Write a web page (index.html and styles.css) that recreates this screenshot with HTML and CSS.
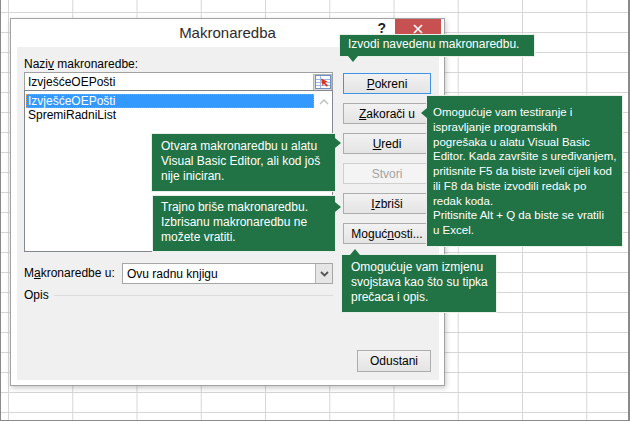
FILE: index.html
```html
<!DOCTYPE html>
<html lang="hr">
<head>
  <meta charset="UTF-8">
  <title>Makronaredba</title>
  <link rel="stylesheet" href="styles.css">
</head>
<body>
  <div class="sheet">
    <div class="dialog">
      <div class="titlebar">
        <span></span>
        <span class="title">Makronaredba</span>
        <div class="caption-buttons">
          <span class="help">?</span>
          <span class="close">
            <svg width="10" height="10" viewBox="0 0 10 10"><path d="M1 1L9 9M9 1L1 9" stroke="#fff" stroke-width="1.7"/></svg>
          </span>
        </div>
      </div>
      <div class="client">
        <div class="left-col">
          <div class="field-label">Nazi<u>v</u> makronaredbe:</div>
          <div class="name-input">
            <span class="value">IzvješćeOEPošti</span>
            <span class="picker">
              <svg width="16" height="14" viewBox="0 0 16 14">
                <rect x="0.5" y="0.5" width="15" height="13" fill="#fff" stroke="#6f8fc0"/>
                <path d="M1 4.5h14M1 7.5h14M1 10.5h14M5.5 1v12" stroke="#9fb8e0"/>
                <path d="M6 3.5L12.5 6.5L10 7.5L13 10.5L11.8 11.7L8.8 8.7L7.6 11Z" fill="#d8331c"/>
              </svg>
            </span>
          </div>
          <div class="macro-list">
            <div class="items">
              <div class="item selected">IzvješćeOEPošti</div>
              <div class="item">SpremiRadniList</div>
            </div>
            <div class="scrollbar">
              <svg width="10" height="6" viewBox="0 0 10 6"><path d="M1 5L5 1L9 5" fill="none" stroke="#c4c4c4" stroke-width="1.6"/></svg>
            </div>
          </div>
          <div class="location-row">
            <span class="field-label">M<u>a</u>kronaredbe u:</span>
            <div class="combo">
              <span class="value">Ovu radnu knjigu</span>
              <span class="combo-btn">
                <svg width="9" height="6" viewBox="0 0 9 6"><path d="M1 1L4.5 4.5L8 1" fill="none" stroke="#555" stroke-width="1.8"/></svg>
              </span>
            </div>
          </div>
          <div class="opis">
            <span>Opis</span>
            <span class="rule"></span>
          </div>
        </div>
        <div class="right-col">
          <button class="btn default" type="button"><u>P</u>okreni</button>
          <button class="btn" type="button"><u>Z</u>akorači u</button>
          <button class="btn" type="button"><u>U</u>redi</button>
          <button class="btn" type="button" disabled>Stvori</button>
          <button class="btn" type="button"><u>I</u>zbriši</button>
          <button class="btn" type="button">Moguć<u>n</u>osti...</button>
          <button class="btn cancel" type="button">Odustani</button>
        </div>
      </div>
    </div>

    <div class="callout callout-run arrow-down">Izvodi navedenu makronaredbu.</div>
    <div class="callout callout-step arrow-left">Omogućuje vam testiranje i<br>ispravljanje programskih<br>pogrešaka u alatu Visual Basic<br>Editor. Kada završite s uređivanjem,<br>pritisnite F5 da biste izveli cijeli kod<br>ili F8 da biste izvodili redak po<br>redak koda.<br>Pritisnite Alt + Q da biste se vratili<br>u Excel.</div>
    <div class="callout callout-edit arrow-right">Otvara makronaredbu u alatu<br>Visual Basic Editor, ali kod još<br>nije iniciran.</div>
    <div class="callout callout-delete arrow-right">Trajno briše makronaredbu.<br>Izbrisanu makronaredbu ne<br>možete vratiti.</div>
    <div class="callout callout-options arrow-up">Omogućuje vam izmjenu<br>svojstava kao što su tipka<br>prečaca i opis.</div>
  </div>
</body>
</html>
```

FILE: styles.css
```css
body {
  margin: 0;
  background: #fff;
  font-family: "Liberation Sans", Arial, sans-serif;
  font-size: 12px;
  color: #000;
}

/* excel grid behind the dialog */
.sheet {
  position: relative;
  width: 630px;
  height: 421px;
  box-sizing: border-box;
  border: 1px solid #8a8a8a;
  border-top: none;
  border-right-width: 2px;
  background-color: #fff;
  background-image:
    linear-gradient(to right, #d6d6d6 1px, transparent 1px),
    linear-gradient(to bottom, #d6d6d6 1px, transparent 1px);
  background-size: 64.25px 20px;
  background-position: 7px 12px;
}

.dialog {
  position: absolute;
  left: 9px;
  top: 18px;
  width: 435px;
  height: 368px;
  box-sizing: border-box;
  border: 1px solid #a3a3a3;
  background: #fff;
  box-shadow: 1px 2px 5px rgba(0, 0, 0, 0.22);
  display: flex;
  flex-direction: column;
}

.titlebar {
  height: 28px;
  display: grid;
  grid-template-columns: 1fr auto 1fr;
  align-items: start;
}

.title {
  font-size: 15px;
  line-height: 28px;
  color: #2b2b2b;
}

.caption-buttons {
  display: flex;
  justify-content: flex-end;
  align-items: flex-start;
  padding-right: 3px;
}

.help {
  font-size: 14px;
  font-weight: bold;
  line-height: 18px;
  color: #222;
  margin-right: 9px;
}

.close {
  width: 46px;
  height: 20px;
  background: #c75050;
  display: flex;
  align-items: center;
  justify-content: center;
}

.client {
  flex: 1;
  margin: 0 5px 5px 6px;
  background: #f0f0f0;
  display: flex;
  padding: 10px 8px 8px 7px;
  gap: 10px;
}

.left-col {
  width: 309px;
  display: flex;
  flex-direction: column;
}

.field-label {
  line-height: 15px;
  white-space: nowrap;
}

.name-input {
  height: 18px;
  box-sizing: border-box;
  border: 1px solid #a0a0a0;
  border-bottom: none;
  background: #fff;
  display: flex;
  align-items: center;
  justify-content: space-between;
  padding-left: 3px;
}

.picker {
  width: 19px;
  height: 17px;
  box-sizing: border-box;
  border: 1px solid #b5b5b5;
  background: #dcdcdc;
  display: flex;
  align-items: center;
  justify-content: center;
  margin-top: 1px;
}

.macro-list {
  height: 162px;
  box-sizing: border-box;
  border: 1px solid #828790;
  background: #fff;
  display: flex;
}

.items {
  flex: 1;
  padding: 3px 1px 0 1px;
}

.item {
  height: 14px;
  line-height: 14px;
  padding-left: 2px;
}

.item.selected {
  background: #3399ff;
  color: #fff;
  outline: 1px dotted #f0912f;
  outline-offset: -1px;
}

.scrollbar {
  width: 17px;
  display: flex;
  justify-content: center;
  padding-top: 8px;
  box-sizing: border-box;
}

.location-row {
  margin-top: 11px;
  display: flex;
  align-items: center;
  justify-content: space-between;
  height: 21px;
}

.combo {
  width: 211px;
  height: 21px;
  box-sizing: border-box;
  border: 1px solid #a6a6a6;
  background: #fff;
  display: flex;
  align-items: center;
  justify-content: space-between;
  padding-left: 4px;
}

.combo-btn {
  width: 17px;
  height: 19px;
  box-sizing: border-box;
  border-left: 1px solid #b4b4b4;
  background: #e6e6e6;
  display: flex;
  align-items: center;
  justify-content: center;
}

.opis {
  margin-top: 4px;
  display: flex;
  align-items: center;
  gap: 5px;
  line-height: 15px;
}

.rule {
  flex: 1;
  height: 1px;
  background: #dcdcdc;
}

.right-col {
  width: 88px;
  display: flex;
  flex-direction: column;
  gap: 9px;
  padding-top: 16px;
}

.btn {
  height: 21px;
  width: 100%;
  box-sizing: border-box;
  border: 1px solid #adadad;
  background: linear-gradient(#f2f2f2, #e4e4e4);
  font-family: inherit;
  font-size: 12px;
  color: #000;
  padding: 0;
}

.btn.default {
  border-color: #3c94e8;
}

.btn:disabled {
  color: #a3a3a3;
  border-color: #cfcfcf;
  background: #f4f4f4;
}

.btn.cancel {
  margin-top: auto;
  width: 74px;
  height: 22px;
  align-self: flex-end;
}

/* green explanation bubbles */
.callout {
  position: absolute;
  box-sizing: border-box;
  background: #217346;
  border: 1px solid #e8efe9;
  color: #fff;
  line-height: 15px;
  white-space: nowrap;
}

.callout::after {
  content: "";
  position: absolute;
  border: 5px solid transparent;
}

.arrow-down::after {
  top: 100%;
  left: 8px;
  border-top: 6px solid #217346;
  border-bottom: 0;
}

.arrow-up::after {
  bottom: 100%;
  left: 8px;
  border-bottom: 6px solid #217346;
  border-top: 0;
}

.arrow-left::after {
  right: 100%;
  border-right: 6px solid #217346;
  border-left: 0;
}

.arrow-right::after {
  left: 100%;
  border-left: 6px solid #217346;
  border-right: 0;
}

.callout-run {
  left: 338px;
  top: 34px;
  width: 196px;
  height: 23px;
  padding: 2px 8px;
  z-index: 2;
}

.callout-step {
  left: 425px;
  top: 95px;
  width: 197px;
  height: 152px;
  padding: 9px 6px;
  font-size: 11.5px;
  line-height: 14.75px;
}

.callout-step::after {
  top: 12px;
}

.callout-edit {
  left: 150px;
  top: 133px;
  width: 185px;
  height: 59px;
  padding: 5px 9px;
}

.callout-edit::after {
  top: 4px;
}

.callout-delete {
  left: 151px;
  top: 195px;
  width: 184px;
  height: 57px;
  padding: 4px 8px;
}

.callout-delete::after {
  top: 6px;
}

.callout-options {
  left: 340px;
  top: 254px;
  width: 156px;
  height: 59px;
  padding: 5px 9px;
}
```
